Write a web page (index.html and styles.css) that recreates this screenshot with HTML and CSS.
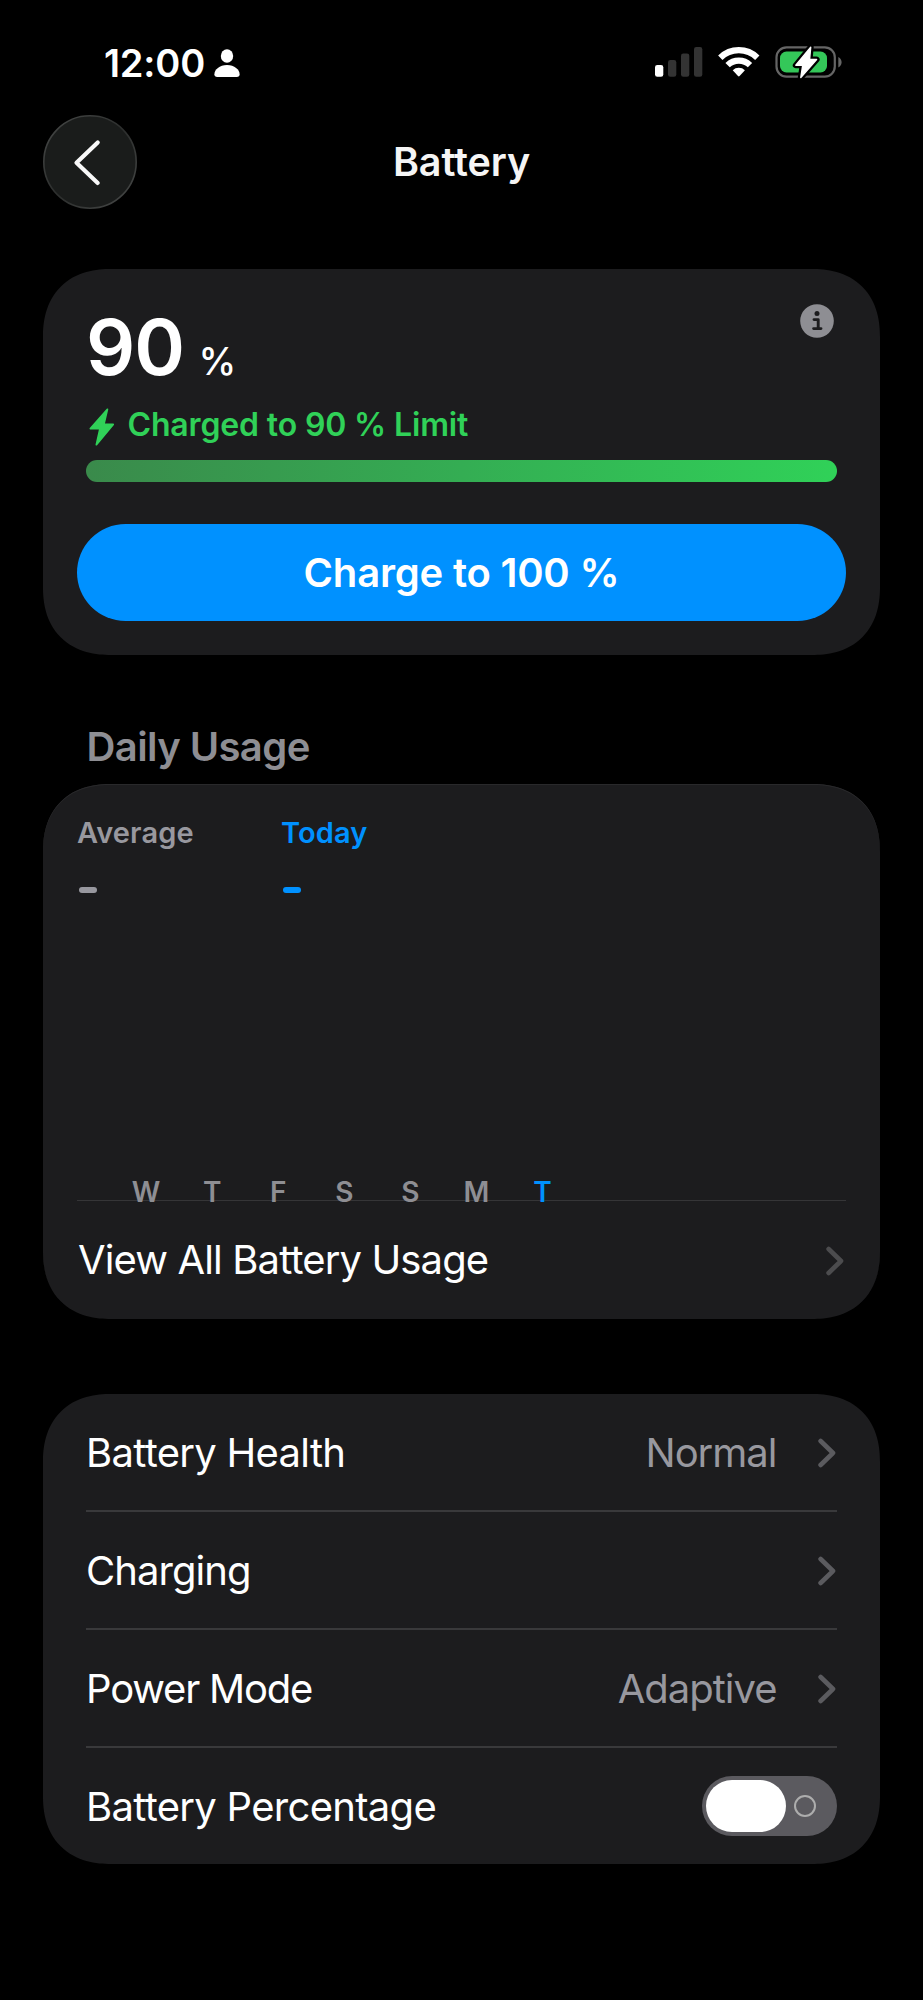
FILE: index.html
```html
<!DOCTYPE html>
<html lang="en">
<head>
<meta charset="utf-8">
<title>Battery</title>
<link rel="stylesheet" href="styles.css">
</head>
<body>
<div class="screen">
  <header class="status">
    <div class="status-left">
      <span class="clock">12:00</span>
      <svg class="person" width="26" height="28" viewBox="0 0 26 28" fill="#fff"><ellipse cx="13" cy="7" rx="6.2" ry="6.8"/><path d="M3.2 28C1.4 28 .4 27 .4 25.300C.4 20.600 5.600 16 13 16S25.600 20.600 25.600 25.300C25.600 27 24.600 28 22.800 28Z"/></svg>
    </div>
    <div class="status-right">
      <svg class="signal" width="48" height="32" viewBox="0 0 48 32"><rect x="0" y="19" width="8.300" height="11.700" rx="2.300" fill="#fff"/><g fill="#333"><rect x="13" y="14" width="8.300" height="16.700" rx="2.300"/><rect x="26" y="7.500" width="8.300" height="23.200" rx="2.300"/><rect x="39" y="1" width="8.300" height="29.700" rx="2.300"/></g></svg>
      <svg class="wifi" width="42" height="32" viewBox="0 0 42 32"><g fill="none" stroke="#fff" stroke-width="6.200"><path d="M2.300 11.700A26.500 26.500 0 0 1 39.300 11.700"/><path d="M9.600 19.100A16 16 0 0 1 32 19.100"/></g><path d="M14.700 24.200A8.800 8.800 0 0 1 26.900 24.200L21.600 30.100Q20.800 30.900 20 30.100Z" fill="#fff"/></svg>
      <svg class="cell" width="68" height="34" viewBox="0 0 68 34"><rect x="1.500" y="2.300" width="58.300" height="29.300" rx="10" fill="none" stroke="#656565" stroke-width="2.200"/><path d="M63.300 12C67.700 14 67.700 20.500 63.300 22.500Z" fill="#656565"/><rect x="5" y="6.500" width="47" height="21" rx="6.500" fill="#34c759"/><path d="M35.700 2.200L20.800 20.300H27.700L25.800 32.500L41.600 14.500H34.600Z" fill="#fff" stroke="#000" stroke-width="6" stroke-linejoin="round"/><path d="M35.700 2.200L20.800 20.300H27.700L25.800 32.500L41.600 14.500H34.600Z" fill="#fff" stroke="#fff" stroke-width="1.400" stroke-linejoin="round"/></svg>
    </div>
  </header>

  <nav class="navbar">
    <button class="back" aria-label="Back"><svg width="94" height="94" viewBox="0 0 94 94"><defs><linearGradient id="rim" x1="0" y1="0" x2="1" y2="1"><stop offset="0" stop-color="#484a49"/><stop offset=".5" stop-color="#2c2e2d"/><stop offset="1" stop-color="#484a49"/></linearGradient></defs><circle cx="47" cy="47" r="46.200" fill="#1a1c1b" stroke="url(#rim)" stroke-width="1.600"/><path d="M54.700 27.500L33.500 47.700L54.700 67.900" fill="none" stroke="#f8f8f8" stroke-width="4.200" stroke-linecap="round" stroke-linejoin="round"/></svg></button>
    <h1 class="title">Battery</h1>
  </nav>

  <main class="content">
    <section class="card charge">
      <div class="charge-top">
        <div class="level"><span class="level-number">90</span><span class="level-unit">%</span></div>
        <svg class="info" width="34" height="34" viewBox="0 0 34 34"><circle cx="17" cy="17" r="16.800" fill="#8e8e93"/><circle cx="17" cy="9.500" r="2.500" fill="#1c1c1e"/><path d="M14 15.600H18.200V24.600M13.600 24.600H21" fill="none" stroke="#1c1c1e" stroke-width="2.900" stroke-linecap="round" stroke-linejoin="round"/></svg>
      </div>
      <div class="charge-state">
        <svg class="bolt" width="26" height="38" viewBox="0 0 26 38"><path d="M18.400 1.400L1.400 20.600H11L7.400 36.600L24.200 16.500H14.800Z" fill="#30d158" stroke="#30d158" stroke-width="1.800" stroke-linejoin="round"/></svg>
        <span class="state-text">Charged to 90 % Limit</span>
      </div>
      <div class="meter"></div>
      <button class="charge-button"><span>Charge to 100 %</span></button>
    </section>

    <h2 class="section-title">Daily Usage</h2>
    <section class="card usage">
      <div class="chart">
        <div class="legend">
          <div class="legend-item"><span class="legend-label average">Average</span><i class="dash"></i></div>
          <div class="legend-item today"><span class="legend-label">Today</span><i class="dash"></i></div>
        </div>
        <div class="days"><span>W</span><span>T</span><span>F</span><span>S</span><span>S</span><span>M</span><span class="today">T</span></div>
      </div>
      <div class="view-all"><span class="view-all-text">View All Battery Usage</span><svg class="chevron" width="18" height="30" viewBox="0 0 18 30"><path d="M2.600 3L15 15L2.600 27"/></svg></div>
    </section>

    <section class="card list">
      <div class="row"><span class="health">Battery Health</span><span class="value">Normal</span><svg class="chevron" width="18" height="30" viewBox="0 0 18 30"><path d="M2.600 3L15 15L2.600 27"/></svg></div>
      <div class="row"><span class="charging">Charging</span><svg class="chevron" width="18" height="30" viewBox="0 0 18 30"><path d="M2.600 3L15 15L2.600 27"/></svg></div>
      <div class="row"><span class="power">Power Mode</span><span class="value">Adaptive</span><svg class="chevron" width="18" height="30" viewBox="0 0 18 30"><path d="M2.600 3L15 15L2.600 27"/></svg></div>
      <div class="row"><span class="percentage">Battery Percentage</span><div class="toggle" role="switch" aria-checked="false"><i class="knob"></i><i class="off-mark"></i></div></div>
    </section>
  </main>
</div>
</body>
</html>
```
FILE: styles.css
```css
* { box-sizing: border-box; }
body {
  margin: 0;
  background: #000;
  color: #fff;
  font-family: Inter, "Liberation Sans", sans-serif;
  -webkit-font-smoothing: antialiased;
}
svg { display: block; flex: none; }
button { border: 0; padding: 0; background: none; color: inherit; font: inherit; }
.screen { width: 923px; height: 2000px; overflow: hidden; }

.status {
  display: flex;
  justify-content: space-between;
  height: 115px;
  padding: 43px 80px 0 104px;
}
.status-left { display: flex; height: 40px; align-items: center; }
.clock { width: 110px; font-size: 38px; font-weight: 600; line-height: 40px; letter-spacing: -0.2px; white-space: nowrap; }
.status-right { display: flex; height: 34px; margin-top: 2px; }
.signal { margin: 1px 15px 0 0; }
.wifi { margin: 1px 15px 0 0; }

.navbar { display: grid; grid-template-columns: 94px 1fr 94px; align-items: center; height: 94px; margin: 0 43px; }
.back { width: 94px; height: 94px; }
.title { margin: 0; text-align: center; font-size: 39.5px; font-weight: 600; line-height: 48px; letter-spacing: -0.1px; color: #f5f5f5; }

.content { padding: 60px 43px 0; }
.card { background: #1c1c1e; border-radius: 62px; }

.charge { height: 386px; padding: 35px 34px 34px; }
.charge-top { display: flex; justify-content: space-between; padding: 0 12px 0 9px; height: 88px; }
.level { display: flex; align-items: baseline; line-height: 88px; margin-top: -1px; }
.level-number { width: 112.500px; font-size: 77px; font-weight: 600; letter-spacing: -1px; }
.level-unit { font-size: 38px; font-weight: 500; }
.charge-state { display: flex; align-items: center; height: 40px; margin: 13px 9px 0 12px; }
.bolt { margin-top: 4px; }
.state-text { margin-left: 12.500px; font-size: 32px; font-weight: 600; line-height: 40px; color: #30d158; letter-spacing: -0.15px; white-space: nowrap; }
.meter { height: 22px; margin: 15px 9px 0; border-radius: 11px; background: linear-gradient(90deg, #3a8a4b, #34ad53 50%, #30d158); }
.charge-button { display: block; width: 769px; height: 97px; margin-top: 42px; border-radius: 49px; background: #0091ff; font-size: 40px; font-weight: 600; letter-spacing: -0.2px; }

.section-title { margin: 67px 0 13px 43.500px; font-size: 40px; line-height: 49px; font-weight: 600; letter-spacing: -0.6px; color: #8e8e93; }

.usage { height: 535px; padding: 0 34px; box-shadow: inset 0 1px #29292b; }
.chart { display: flex; flex-direction: column; justify-content: space-between; height: 417px; border-bottom: 1px solid #353537; padding-top: 31px; }
.legend { display: flex; }
.legend-item { width: 204px; color: #98989f; }
.legend-label { display: block; height: 36px; line-height: 36px; font-size: 29px; font-weight: 600; letter-spacing: 0.1px; }
.dash { display: block; width: 18px; height: 6px; margin: 36px 0 0 2px; border-radius: 3px; background: currentColor; }
.legend .today, .days .today { color: #0091ff; }
.days { display: flex; height: 20px; margin: 0 0 -2px 36px; color: #8e8e93; font-size: 28px; line-height: 20px; font-weight: 600; }
.days span { width: 66.1px; text-align: center; }
.view-all { display: flex; align-items: center; justify-content: space-between; height: 118px; padding: 0 2px 0 1px; }
.view-all-text { margin-top: -1px; font-size: 40px; letter-spacing: -0.87px; white-space: nowrap; }

.chevron { margin-top: 2px; }
.chevron path { fill: none; stroke: #5b5b5f; stroke-width: 4.600; stroke-linecap: round; stroke-linejoin: round; }
.view-all .chevron path { stroke: #4c4c4e; }

.list { margin-top: 75px; padding: 0 43px; }
.row { display: flex; align-items: center; height: 118px; font-size: 40px; letter-spacing: -0.7px; border-bottom: 2px solid #39393b; white-space: nowrap; }
.row:last-child { height: 116px; border: 0; }
.row .chevron { margin-left: auto; margin-right: 1.500px; }
.charging { letter-spacing: -0.95px; }
.power { letter-spacing: -1.2px; }
.value { margin-left: auto; color: #98989f; letter-spacing: -1px; }
.value + .chevron { margin-left: 41px; }
.toggle { display: flex; align-items: center; width: 135px; height: 60px; margin-left: auto; padding-left: 4px; border-radius: 30px; background: #5b5a5f; }
.knob { width: 80px; height: 52px; border-radius: 26px; background: #fff; }
.off-mark { width: 22px; height: 22px; margin-left: 8px; border: 2.500px solid #adadad; border-radius: 50%; }

@supports (corner-shape: superellipse(1.2)) {
  .card { border-radius: 68px; corner-shape: superellipse(1.2); }
}
```
